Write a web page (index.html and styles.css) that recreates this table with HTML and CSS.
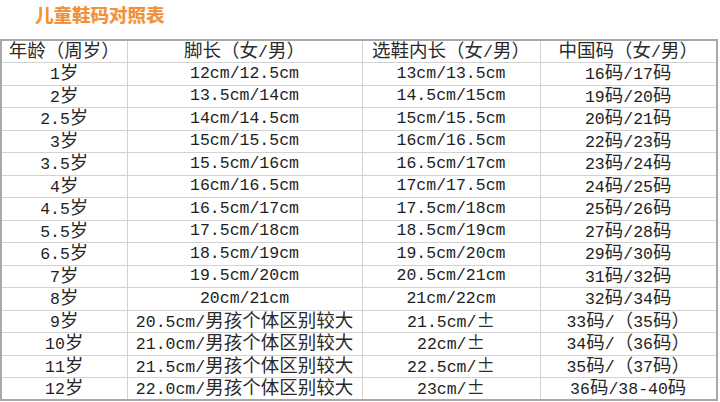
FILE: index.html
```html
<!DOCTYPE html>
<html lang="zh">
<head>
<meta charset="utf-8">
<title>儿童鞋码对照表</title>
<link rel="stylesheet" href="styles.css">
</head>
<body>
<h1 class="title">儿童鞋码对照表</h1>
<table class="sizes">
<colgroup><col class="c1"><col class="c2"><col class="c3"><col class="c4"></colgroup>
<thead>
<tr><th><span class="z">年龄（周岁）</span></th><th><span class="z">脚长（女</span>/<span class="z">男）</span></th><th><span class="z">选鞋内长（女</span>/<span class="z">男）</span></th><th><span class="z">中国码（女</span>/<span class="z">男）</span></th></tr>
</thead>
<tbody>
<tr><td>1<span class="z">岁</span></td><td>12cm/12.5cm</td><td>13cm/13.5cm</td><td>16<span class="z">码</span>/17<span class="z">码</span></td></tr>
<tr><td>2<span class="z">岁</span></td><td>13.5cm/14cm</td><td>14.5cm/15cm</td><td>19<span class="z">码</span>/20<span class="z">码</span></td></tr>
<tr><td>2.5<span class="z">岁</span></td><td>14cm/14.5cm</td><td>15cm/15.5cm</td><td>20<span class="z">码</span>/21<span class="z">码</span></td></tr>
<tr><td>3<span class="z">岁</span></td><td>15cm/15.5cm</td><td>16cm/16.5cm</td><td>22<span class="z">码</span>/23<span class="z">码</span></td></tr>
<tr><td>3.5<span class="z">岁</span></td><td>15.5cm/16cm</td><td>16.5cm/17cm</td><td>23<span class="z">码</span>/24<span class="z">码</span></td></tr>
<tr><td>4<span class="z">岁</span></td><td>16cm/16.5cm</td><td>17cm/17.5cm</td><td>24<span class="z">码</span>/25<span class="z">码</span></td></tr>
<tr><td>4.5<span class="z">岁</span></td><td>16.5cm/17cm</td><td>17.5cm/18cm</td><td>25<span class="z">码</span>/26<span class="z">码</span></td></tr>
<tr><td>5.5<span class="z">岁</span></td><td>17.5cm/18cm</td><td>18.5cm/19cm</td><td>27<span class="z">码</span>/28<span class="z">码</span></td></tr>
<tr><td>6.5<span class="z">岁</span></td><td>18.5cm/19cm</td><td>19.5cm/20cm</td><td>29<span class="z">码</span>/30<span class="z">码</span></td></tr>
<tr><td>7<span class="z">岁</span></td><td>19.5cm/20cm</td><td>20.5cm/21cm</td><td>31<span class="z">码</span>/32<span class="z">码</span></td></tr>
<tr><td>8<span class="z">岁</span></td><td>20cm/21cm</td><td>21cm/22cm</td><td>32<span class="z">码</span>/34<span class="z">码</span></td></tr>
<tr><td>9<span class="z">岁</span></td><td>20.5cm/<span class="z">男孩个体区别较大</span></td><td>21.5cm/<span class="z">±</span></td><td>33<span class="z">码</span>/<span class="z">（</span>35<span class="z">码）</span></td></tr>
<tr><td>10<span class="z">岁</span></td><td>21.0cm/<span class="z">男孩个体区别较大</span></td><td>22cm/<span class="z">±</span></td><td>34<span class="z">码</span>/<span class="z">（</span>36<span class="z">码）</span></td></tr>
<tr><td>11<span class="z">岁</span></td><td>21.5cm/<span class="z">男孩个体区别较大</span></td><td>22.5cm/<span class="z">±</span></td><td>35<span class="z">码</span>/<span class="z">（</span>37<span class="z">码）</span></td></tr>
<tr><td>12<span class="z">岁</span></td><td>22.0cm/<span class="z">男孩个体区别较大</span></td><td>23cm/<span class="z">±</span></td><td>36<span class="z">码</span>/38-40<span class="z">码</span></td></tr>
</tbody>
</table>
</body>
</html>
```
FILE: styles.css
```css
html, body {
  margin: 0;
  padding: 0;
  background: #ffffff;
}
body {
  width: 720px;
  height: 402px;
  overflow: hidden;
}
.title {
  margin: 0;
  height: 39px;
  box-sizing: border-box;
  padding: 2px 0 0 35px;
  font-family: "Noto Sans CJK SC", sans-serif;
  font-size: 18.5px;
  font-weight: 700;
  line-height: 24px;
  color: #f0903a;
  text-shadow: 0 0 1px rgba(239, 138, 44, 0.5);
}
.sizes {
  border-collapse: collapse;
  table-layout: fixed;
  width: 716px;
  margin-left: 0;
  border: 2px solid #a8a8a8;
  font-family: "Liberation Mono", "Noto Sans CJK SC", monospace;
  font-size: 16.5px;
  color: #1e1e1e;
}
.c1 { width: 126px; }
.c2 { width: 235px; }
.c3 { width: 178px; }
.c4 { width: 177px; }
.sizes tr {
  height: 22.5px;
}
.sizes th,
.sizes td {
  height: 21px;
  padding: 0;
  border: 1px solid #d2d2d2;
  text-align: center;
  vertical-align: middle;
  font-weight: 400;
  line-height: 16px;
  white-space: nowrap;
}
.z {
  font-family: "Noto Sans CJK SC", sans-serif;
  font-size: 18.5px;
  font-weight: 400;
  line-height: 14px;
  color: #2a2a2a;
}
```
